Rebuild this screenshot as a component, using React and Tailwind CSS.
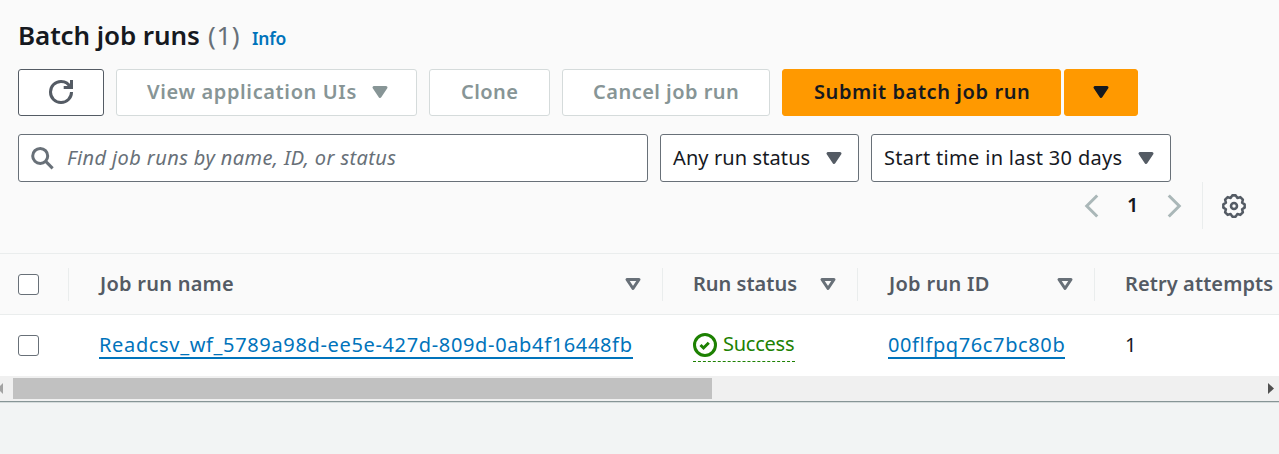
const Caret = ({ className }) => (
  <svg viewBox="0 0 16 16" className={`size-6 shrink-0 ${className}`} fill="currentColor" stroke="currentColor" strokeWidth="2" strokeLinejoin="round">
    <path d="M4 5h8l-4 6z" />
  </svg>
);

const SortCaret = () => (
  <svg viewBox="0 0 16 16" className="size-6 shrink-0 text-[#687078]" fill="none" stroke="currentColor" strokeWidth="2" strokeLinejoin="round">
    <path d="M4 5h8l-4 6z" />
  </svg>
);

const Chevron = ({ d }) => (
  <svg viewBox="0 0 16 16" className="size-6 text-[#aab7b8]" fill="none" stroke="currentColor" strokeWidth="2">
    <path d={d} />
  </svg>
);

const Button = ({ className, children }) => (
  <button className={`flex h-[47px] shrink-0 items-center rounded-[3px] border pb-0.5 font-semibold ${className}`}>{children}</button>
);

const Checkbox = () => <span className="block size-[21px] shrink-0 rounded-[3px] border border-[#687078] bg-white" />;

const HeaderCell = ({ className, children }) => (
  <div className={`flex h-[33px] shrink-0 items-center justify-between border-l border-[#eaeded] pl-[30px] font-semibold text-[#545b64] ${className}`}>
    {children}
  </div>
);

export default function App() {
  return (
    <div className="h-[454px] w-[1279px] overflow-hidden whitespace-nowrap bg-[#f2f4f4] font-['Noto_Sans',sans-serif] text-[20px] leading-[30px] text-[#16191f]">
      <section className="bg-[#fafafa]">
        <div className="flex h-[69px] items-baseline pl-[18px] pt-[17px]">
          <h1 className="w-[190px] text-[26px] font-semibold leading-9 tracking-[-0.1px]">Batch job runs</h1>
          <span className="w-11 text-[26px] leading-9 tracking-[0.6px] text-[#687078]">(1)</span>
          <a className="text-[17.5px] font-semibold tracking-[-0.2px] text-[#0073bb]">Info</a>
        </div>

        <div className="flex gap-3 pl-[18px]">
          <Button className="w-[86px] justify-center border-[#545b64] bg-white pb-0 text-[#545b64]">
            <svg viewBox="0 0 16 16" className="size-6" fill="none" stroke="currentColor" strokeWidth="2">
              <path d="M9.8 5H15V0" />
              <path d="M15 8a6.957 6.957 0 0 1-7 7 6.957 6.957 0 0 1-7-7 6.957 6.957 0 0 1 7-7 6.87 6.87 0 0 1 6.3 4" />
            </svg>
          </Button>
          <Button className="w-[301px] justify-between border-[#d5dbdb] bg-white pl-[30px] pr-6 tracking-[0.62px] text-[#879596]">
            View application UIs
            <Caret className="mt-px" />
          </Button>
          <Button className="w-[121px] border-[#d5dbdb] bg-white pl-[31px] tracking-[0.45px] text-[#879596]">Clone</Button>
          <Button className="w-[208px] border-[#d5dbdb] bg-white pl-[30px] tracking-[0.47px] text-[#879596]">Cancel job run</Button>
          <div className="flex gap-[3px]">
            <Button className="w-[279px] border-[#ff9900] bg-[#ff9900] pl-[31px] tracking-[0.58px]">Submit batch job run</Button>
            <Button className="w-[74px] justify-center border-[#ff9900] bg-[#ff9900] pb-0">
              <Caret />
            </Button>
          </div>
        </div>

        <div className="mt-[18px] flex gap-3 pl-[18px]">
          <div className="flex h-12 w-[630px] items-center rounded-[3px] border border-[#687078] bg-white pl-[11px] text-[#687078]">
            <svg viewBox="0 0 16 16" className="mr-[13px] size-6" fill="none" stroke="currentColor" strokeWidth="2">
              <circle cx="6.8" cy="6.6" r="5" />
              <path d="m10.3 10.1 4.8 4.8" />
            </svg>
            <span className="italic tracking-[0.4px]">Find job runs by name, ID, or status</span>
          </div>
          <div className="flex h-12 w-[199px] items-center justify-between rounded-[3px] border border-[#687078] bg-white pl-3 pr-3">
            <span className="tracking-[0.1px]">Any run status</span>
            <Caret className="text-[#545b64]" />
          </div>
          <div className="flex h-12 w-[300px] items-center justify-between rounded-[3px] border border-[#687078] bg-white pl-3 pr-3">
            <span className="tracking-[0.32px]">Start time in last 30 days</span>
            <Caret className="text-[#545b64]" />
          </div>
        </div>

        <div className="flex h-[47px] items-center justify-end pr-[33px]">
          <Chevron d="M11.5 1 4.5 8l7 7" />
          <span className="ml-[23px] w-[35px] pb-0.5 font-semibold">1</span>
          <Chevron d="m4.5 1 7 7-7 7" />
          <span className="ml-4 h-[47px] border-l border-[#eaeded]" />
          <svg viewBox="0 0 16 16" className="ml-[19px] size-6 text-[#545b64]" fill="none" stroke="currentColor" strokeWidth="1.7" strokeLinejoin="round">
            <path d="M15.1 6.9V9.1L13.4 10.2 13.9 12.2 12.2 13.9 10.2 13.4 9.1 15.1H6.9L5.8 13.4 3.8 13.9 2.1 12.2 2.6 10.2 0.9 9.1V6.9L2.6 5.8 2.1 3.8 3.8 2.1 5.8 2.6 6.9 0.9H9.1L10.2 2.6 12.2 2.1 13.9 3.8 13.4 5.8z" />
            <circle cx="8" cy="8" r="2" />
          </svg>
        </div>
        <div className="h-6" />

        <div className="flex h-[62px] items-center border-y border-[#eaeded] pl-[18px]">
          <div className="w-[50px]">
            <Checkbox />
          </div>
          <HeaderCell className="w-[594px] pr-[17px]">
            <span className="pb-px pl-px tracking-[0.25px]">Job run name</span>
            <SortCaret />
          </HeaderCell>
          <HeaderCell className="w-[195px] pr-[17px]">
            <span className="pb-px">Run status</span>
            <SortCaret />
          </HeaderCell>
          <HeaderCell className="w-[237px] pr-[17px]">
            <span className="pb-px pl-px tracking-[0.3px]">Job run ID</span>
            <SortCaret />
          </HeaderCell>
          <HeaderCell>
            <span className="pb-px tracking-[0.1px]">Retry attempts</span>
          </HeaderCell>
        </div>
      </section>

      <div className="flex h-[61px] items-center bg-white pl-[18px]">
        <div className="w-[81px]">
          <Checkbox />
        </div>
        <div className="w-[594px] pb-0.5">
          <a className="inline-block h-7 border-b-2 border-[#0073bb] leading-[27px] tracking-[0.65px] text-[#0073bb]">
            Readcsv_wf_5789a98d-ee5e-427d-809d-0ab4f16448fb
          </a>
        </div>
        <div className="w-[195px]">
          <span className="mt-[3px] flex h-[30px] w-[102px] items-start border-b border-dashed border-[#1d8102] text-[#1d8102]">
            <svg viewBox="0 0 16 16" className="mr-1.5 mt-px size-6 shrink-0" fill="none" stroke="currentColor" strokeWidth="2">
              <circle cx="8" cy="8" r="7" />
              <path d="m5 8 2 2 3.521-3.521" />
            </svg>
            <span className="leading-6 tracking-[-0.25px]">Success</span>
          </span>
        </div>
        <div className="w-[237px] pb-0.5">
          <a className="inline-block h-7 border-b-2 border-[#0073bb] leading-[27px] tracking-[0.62px] text-[#0073bb]">00flfpq76c7bc80b</a>
        </div>
        <span className="pb-0.5">1</span>
      </div>

      <div className="flex h-[25px] items-center bg-[#f0f0f0]">
        <svg viewBox="0 0 3 11" className="mr-2.5 h-[11px] w-[3px]" fill="#a3a3a3">
          <path d="M3 0v11L0 8V3z" />
        </svg>
        <div className="h-[21px] w-[699px] bg-[#c1c1c1]" />
        <svg viewBox="0 0 6 11" className="ml-auto mr-[5px] h-[11px] w-1.5" fill="#505050">
          <path d="M0 0l6 5.5L0 11z" />
        </svg>
      </div>
      <div className="h-0.5 border-t border-[#879596] bg-[#d5dbdb]" />
    </div>
  );
}
